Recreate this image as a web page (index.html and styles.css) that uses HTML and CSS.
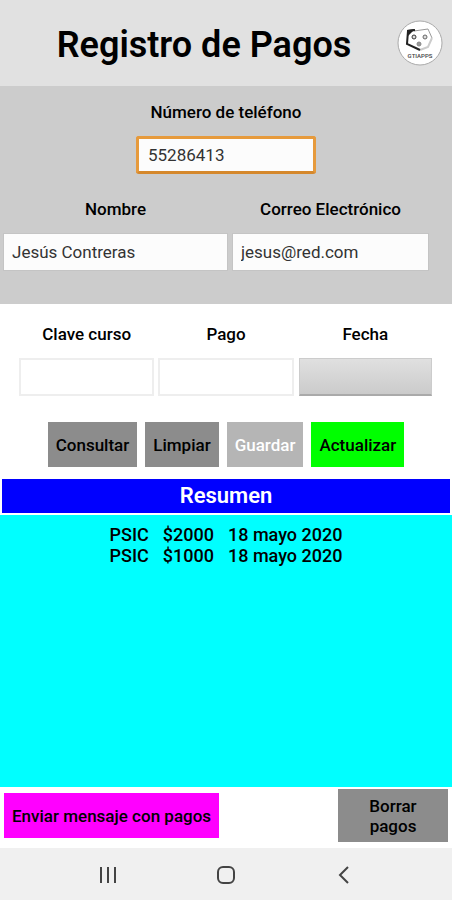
FILE: index.html
```html
<!DOCTYPE html>
<html lang="es">
<head>
    <meta charset="UTF-8">
    <meta name="viewport" content="width=device-width, initial-scale=1.0">
    <title>Registro de Pagos</title>
    <link rel="stylesheet" href="styles.css">
</head>
<body>
    <header>
        <h1>Registro de Pagos</h1>
        <svg class="logo" viewBox="0 0 46 46" role="img" aria-label="Logo">
            <circle cx="23" cy="23" r="22" fill="#fff" stroke="#aaa" stroke-width="1"/>
            <path d="M17 11 L31 9 L35 18" fill="none" stroke="#999" stroke-width="1"/>
            <path d="M35 18 L31 27 L23 30" fill="none" stroke="#ccc" stroke-width="2"/>
            <path d="M18 10 L11 11 L10 24 L23 30" fill="none" stroke="#222" stroke-width="2"/>
            <path d="M10 10 L18 9 L10 17 Z" fill="#222"/>
            <circle cx="17" cy="17" r="2" fill="#ddd" stroke="#333" stroke-width="1"/>
            <circle cx="28" cy="17" r="2" fill="#ddd" stroke="#666" stroke-width="1"/>
            <circle cx="22" cy="24" r="2" fill="#999" stroke="#888" stroke-width="1"/>
            <text x="23" y="38" text-anchor="middle" class="logo-text">GTIAPPS</text>
        </svg>
    </header>
    <main>
        <form id="payment-form">
            <section class="client">
                <div class="field phone">
                    <label for="phone">Número de teléfono</label>
                    <input type="text" id="phone" value="55286413">
                </div>
                <div class="client-row">
                    <div class="field">
                        <label for="name">Nombre</label>
                        <input type="text" id="name" value="Jesús Contreras">
                    </div>
                    <div class="field">
                        <label for="email">Correo Electrónico</label>
                        <input type="text" id="email" value="jesus@red.com">
                    </div>
                </div>
            </section>
            <section class="payment">
                <div class="payment-row">
                    <div class="field">
                        <label for="course">Clave curso</label>
                        <input type="text" id="course">
                    </div>
                    <div class="field">
                        <label for="amount">Pago</label>
                        <input type="text" id="amount">
                    </div>
                    <div class="field">
                        <label for="date">Fecha</label>
                        <button type="button" id="date" class="date-button"></button>
                    </div>
                </div>
                <div class="actions">
                    <button type="button" class="btn">Consultar</button>
                    <button type="button" class="btn">Limpiar</button>
                    <button type="button" class="btn btn-disabled" disabled>Guardar</button>
                    <button type="button" class="btn btn-update">Actualizar</button>
                </div>
            </section>
        </form>
        <h2>Resumen</h2>
        <section class="summary">
            <table>
                <tr><td>PSIC</td><td>$2000</td><td>18 mayo 2020</td></tr>
                <tr><td>PSIC</td><td>$1000</td><td>18 mayo 2020</td></tr>
            </table>
        </section>
        <div class="bottom-actions">
            <button type="button" class="btn btn-send">Enviar mensaje con pagos</button>
            <button type="button" class="btn btn-delete">Borrar pagos</button>
        </div>
    </main>
    <nav>
        <button type="button" aria-label="Recientes">
            <svg viewBox="0 0 20 20"><path d="M3 2v16M10 2v16M17 2v16"/></svg>
        </button>
        <button type="button" aria-label="Inicio">
            <svg viewBox="0 0 20 20"><rect x="2" y="2" width="16" height="16" rx="5"/></svg>
        </button>
        <button type="button" aria-label="Atrás">
            <svg viewBox="0 0 20 20"><path d="M14 2 L6 10 L14 18"/></svg>
        </button>
    </nav>
</body>
</html>
```

FILE: styles.css
```css
* {
    box-sizing: border-box;
}

body {
    margin: 0;
    min-height: 100vh;
    display: flex;
    flex-direction: column;
    font-family: Roboto, sans-serif;
    font-size: 17px;
    line-height: 20px;
    color: #000;
    background-color: #fff;
}

header {
    display: flex;
    align-items: center;
    height: 86px;
    padding: 0 9px 0 11px;
    background-color: #e1e1e1;
}

h1 {
    flex: 1;
    margin: 0;
    padding-top: 4px;
    font-size: 36px;
    font-weight: 600;
    line-height: 44px;
    text-align: center;
}

.logo {
    width: 46px;
    height: 46px;
}

.logo-text {
    font-size: 6px;
    font-weight: 500;
    fill: #444;
}

main {
    flex: 1;
    display: flex;
    flex-direction: column;
}

.field {
    display: flex;
    flex-direction: column;
    gap: 14px;
}

label {
    font-weight: 500;
    text-align: center;
}

input {
    width: 100%;
    height: 38px;
    padding: 0 8px;
    border: 1px solid #c4c4c4;
    background-color: #fcfcfc;
    color: #333;
    font-family: inherit;
    font-size: 17px;
    outline: none;
}

.client {
    height: 218px;
    padding: 16px 3px;
    background-color: #ccc;
}

.phone {
    width: 180px;
    margin: 0 auto 25px;
}

.phone input {
    padding: 0 9px;
    border: 3px solid #e69a3c;
    border-bottom-color: #d5882c;
    border-radius: 3px;
}

.client-row {
    display: grid;
    grid-template-columns: 225fr 197fr;
    gap: 4px;
    padding-right: 20px;
}

.payment {
    padding: 20px 19px 12px;
}

.payment-row {
    display: grid;
    grid-template-columns: 1fr 1fr 1fr;
    gap: 4px;
}

.payment input {
    border: 2px solid #eee;
    background-color: #fff;
}

.date-button {
    height: 38px;
    margin: 0 1px;
    border: 1px solid #ccc;
    border-bottom: 2px solid #aaa;
    background: linear-gradient(#e0e0e0, #cbcbcb);
}

.actions {
    display: flex;
    justify-content: center;
    gap: 8px;
    margin-top: 26px;
}

.btn {
    height: 45px;
    padding: 0 8px;
    border: none;
    background-color: #8c8c8c;
    color: #000;
    font-family: inherit;
    font-size: 17px;
    font-weight: 500;
    line-height: 20px;
}

.btn-disabled {
    background-color: #b5b5b5;
    color: #fff;
}

.btn-update {
    background-color: #0f0;
}

h2 {
    margin: 0 2px 2px;
    background-color: #00f;
    color: #fff;
    font-size: 22px;
    font-weight: 600;
    line-height: 34px;
    text-align: center;
}

.summary {
    flex: 1;
    padding-top: 9px;
    background-color: #0ff;
}

table {
    margin: 0 auto;
    border-collapse: collapse;
    font-size: 18px;
    font-weight: 500;
    line-height: 21px;
}

td {
    padding: 0 14px 0 0;
}

td:last-child {
    padding-right: 0;
}

.bottom-actions {
    display: flex;
    align-items: center;
    justify-content: space-between;
    height: 61px;
    padding: 2px 4px 6px;
}

.btn-send {
    background-color: #f0f;
}

.btn-delete {
    width: 110px;
    height: 53px;
    padding: 0 24px;
}

nav {
    display: flex;
    align-items: center;
    justify-content: center;
    gap: 98px;
    height: 52px;
    padding-top: 2px;
    background-color: #f0f0f0;
}

nav button {
    width: 20px;
    height: 20px;
    padding: 0;
    border: none;
    background: none;
}

nav svg {
    display: block;
    fill: none;
    stroke: #444;
    stroke-width: 2;
}
```
